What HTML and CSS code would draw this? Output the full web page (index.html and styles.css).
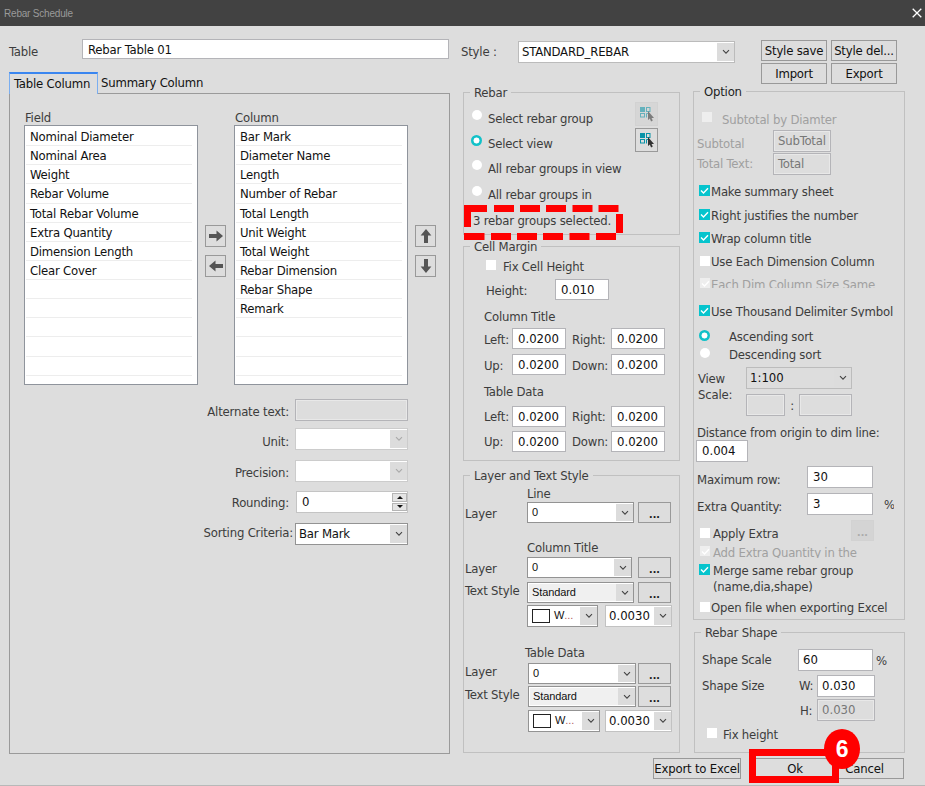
FILE: index.html
```html
<!DOCTYPE html>
<html lang="en">
<head>
<meta charset="utf-8">
<title>Rebar Schedule</title>
<link rel="stylesheet" href="styles.css">
</head>
<body>
<svg class="defs" width="0" height="0" aria-hidden="true">
  <symbol id="chev" viewBox="0 0 8 6"><path d="M1 1.2 4 4.2 7 1.2" fill="none" stroke="currentColor" stroke-width="1.1"/></symbol>
  <symbol id="arrow" viewBox="0 0 14 12"><path d="M0 4h7.500V0.600L14 6l-6.500 5.400V8H0z" fill="currentColor"/></symbol>
  <symbol id="tick" viewBox="0 0 11 11"><path d="M2 5.500 4.500 8 9 3.200" fill="none" stroke="#fff" stroke-width="1.400"/></symbol>
  <symbol id="pick" viewBox="0 0 14 15">
    <rect x="0" y="0" width="5" height="5" fill="#0893a8"/>
    <rect x="6.500" y=".5" width="3.500" height="4" fill="none" stroke="#0893a8"/>
    <rect x=".5" y="6.500" width="4" height="3.500" fill="none" stroke="#0893a8"/>
    <path d="M6.500 10.500V6.500h2" fill="none" stroke="#0893a8"/>
    <path d="M8 4v9l1.800-1.600 1.300 3 1.700-.8-1.300-2.700h2.500z" fill="#333"/>
  </symbol>
</svg>
<div class="dialog">
  <header class="titlebar"><span>Rebar Schedule</span>
    <svg class="close" viewBox="0 0 10 10"><path d="M.7.7l8.600 8.600M9.300.7.7 9.300" stroke="#fff" stroke-width="1.300"/></svg>
  </header>
  <main class="body">
    <section class="left">
      <div class="row table-row"><label class="lbl">Table</label><div class="input">Rebar Table 01</div></div>
      <nav class="tabs"><span class="tab active">Table Column</span><span class="tab">Summary Column</span></nav>
      <div class="tab-panel">
        <div class="lists">
          <div class="list-col"><span class="list-title">Field</span>
            <ul class="list"><li>Nominal Diameter</li><li>Nominal Area</li><li>Weight</li><li>Rebar Volume</li><li>Total Rebar Volume</li><li>Extra Quantity</li><li>Dimension Length</li><li>Clear Cover</li><li></li><li></li><li></li><li></li><li></li></ul>
          </div>
          <div class="movers">
            <button class="sq"><svg><use href="#arrow"/></svg></button>
            <button class="sq"><svg class="w"><use href="#arrow"/></svg></button>
          </div>
          <div class="list-col"><span class="list-title">Column</span>
            <ul class="list"><li>Bar Mark</li><li>Diameter Name</li><li>Length</li><li>Number of Rebar</li><li>Total Length</li><li>Unit Weight</li><li>Total Weight</li><li>Rebar Dimension</li><li>Rebar Shape</li><li>Remark</li><li></li><li></li><li></li></ul>
          </div>
          <div class="movers">
            <button class="sq"><svg class="n"><use href="#arrow"/></svg></button>
            <button class="sq"><svg class="s"><use href="#arrow"/></svg></button>
          </div>
        </div>
        <div class="form">
          <div class="frow"><label class="lbl">Alternate text:</label><div class="input off"></div></div>
          <div class="frow unit"><label class="lbl">Unit:</label><div class="combo pale"><span></span><i><svg><use href="#chev"/></svg></i></div></div>
          <div class="frow precision"><label class="lbl">Precision:</label><div class="combo pale"><span></span><i><svg><use href="#chev"/></svg></i></div></div>
          <div class="frow rounding"><label class="lbl">Rounding:</label><div class="combo soft"><span>0</span><b class="spin"><em class="up"></em><em class="down"></em></b></div></div>
          <div class="frow sorting"><label class="lbl">Sorting Criteria:</label><div class="combo"><span>Bar Mark</span><i><svg><use href="#chev"/></svg></i></div></div>
        </div>
      </div>
    </section>

    <section class="right">
      <div class="style-row">
        <label class="lbl">Style :</label>
        <div class="combo style-combo"><span>STANDARD_REBAR</span><i><svg><use href="#chev"/></svg></i></div>
        <div class="style-btns"><button class="btn">Style save</button><button class="btn">Style del...</button><button class="btn">Import</button><button class="btn">Export</button></div>
      </div>
      <div class="cols">
        <div class="col-mid">
          <div class="group rebar">
            <div class="legend">Rebar</div>
            <div class="rebar-in">
              <div class="radios">
                <div class="row r26"><i class="radio"></i><span>Select rebar group</span></div>
                <div class="row r24"><i class="radio on"></i><span>Select view</span></div>
                <div class="row r26"><i class="radio"></i><span>All rebar groups in view</span></div>
                <div class="row r26"><i class="radio"></i><span>All rebar groups in</span></div>
                <div class="row r26 status">3 rebar groups selected.</div>
              </div>
              <div class="picks"><button class="pick off"><svg><use href="#pick"/></svg></button><button class="pick"><svg><use href="#pick"/></svg></button></div>
            </div>
            <svg class="dashes" viewBox="0 0 159 35" fill="#f00">
              <path d="M0 0h23v7H0zM30 0h20v7H30zM56 0h20v7H56zM82 0h20v7H82zM108.500 0h20v7h-20zM134.500 0h20v7h-20zM0 28h20.500v7H0zM27 28h20v7H27zM53 28h20v7H53zM79 28h20v7H79zM105.500 28h20v7h-20zM132 28h20v7h-20zM0 0h7v22H0zM152 9h7v19h-7z"/>
            </svg>
          </div>

          <div class="group cell">
            <div class="legend">Cell Margin</div>
            <div class="row fix"><i class="chk"></i><span>Fix Cell Height</span></div>
            <div class="row height"><label class="lbl">Height:</label><div class="input">0.010</div></div>
            <div class="row sub">Column Title</div>
            <div class="row quad q1"><label class="lbl">Left:</label><div class="input">0.0200</div><label class="lbl b">Right:</label><div class="input">0.0200</div></div>
            <div class="row quad q2"><label class="lbl">Up:</label><div class="input">0.0200</div><label class="lbl b">Down:</label><div class="input">0.0200</div></div>
            <div class="row sub">Table Data</div>
            <div class="row quad q2 up"><label class="lbl">Left:</label><div class="input">0.0200</div><label class="lbl b">Right:</label><div class="input">0.0200</div></div>
            <div class="row quad q3 up"><label class="lbl">Up:</label><div class="input">0.0200</div><label class="lbl b">Down:</label><div class="input">0.0200</div></div>
          </div>

          <div class="group layer">
            <div class="legend">Layer and Text Style</div>
            <div class="row sub s1">Line</div>
            <div class="row lrow l1"><label class="lbl">Layer</label><div class="combo sm"><span>0</span><i><svg><use href="#chev"/></svg></i></div><button class="btn dots">...</button></div>
            <div class="row sub s2">Column Title</div>
            <div class="row lrow l2"><label class="lbl">Layer</label><div class="combo sm short"><span>0</span><i><svg><use href="#chev"/></svg></i></div><button class="btn dots">...</button></div>
            <div class="row lrow l3 up"><label class="lbl">Text Style</label><div class="combo sm gray"><span>Standard</span><i><svg><use href="#chev"/></svg></i></div><button class="btn dots">...</button></div>
            <div class="row lrow l4"><div class="combo sm color"><span><u></u>W<em>...</em></span><i><svg><use href="#chev"/></svg></i></div><div class="combo pale2 num"><span>0.0030</span><i><svg><use href="#chev"/></svg></i></div></div>
            <div class="row sub s3">Table Data</div>
            <div class="row lrow l5 up wide"><label class="lbl">Layer</label><div class="combo sm"><span>0</span><i><svg><use href="#chev"/></svg></i></div><button class="btn dots">...</button></div>
            <div class="row lrow l6 up wide"><label class="lbl">Text Style</label><div class="combo sm gray"><span>Standard</span><i><svg><use href="#chev"/></svg></i></div><button class="btn dots">...</button></div>
            <div class="row lrow l7 wide"><div class="combo sm color"><span><u></u>W<em>...</em></span><i><svg><use href="#chev"/></svg></i></div><div class="combo pale2 num"><span>0.0030</span><i><svg><use href="#chev"/></svg></i></div></div>
          </div>
        </div>

        <div class="col-right">
          <div class="group option">
            <div class="legend dark">Option</div>
            <div class="row subtotal-by off"><i class="chk"></i><span>Subtotal by Diamter</span></div>
            <div class="row sub-row off"><label class="lbl">Subtotal</label><div class="input off">SubTotal</div></div>
            <div class="row sub-row total off"><label class="lbl">Total Text:</label><div class="input off">Total</div></div>
            <div class="row ck m8"><i class="chk on"><svg><use href="#tick"/></svg></i><span>Make summary sheet</span></div>
            <div class="row ck m6"><i class="chk on"><svg><use href="#tick"/></svg></i><span>Right justifies the number</span></div>
            <div class="row ck m5"><i class="chk on"><svg><use href="#tick"/></svg></i><span>Wrap column title</span></div>
            <div class="row ck m5"><i class="chk"></i><span>Use Each Dimension Column</span></div>
            <div class="row ck m5 off clip12"><i class="chk"><svg><use href="#tick"/></svg></i><span>Each Dim Column Size Same</span></div>
            <div class="row ck m15 clip14"><i class="chk on"><svg><use href="#tick"/></svg></i><span>Use Thousand Delimiter Symbol</span></div>
            <div class="row sort first"><i class="radio on"></i><span>Ascending sort</span></div>
            <div class="row sort"><i class="radio"></i><span>Descending sort</span></div>
            <div class="scale">
              <label class="lbl">View<br>Scale:</label>
              <div class="scale-in">
                <div class="combo flat"><span>1:100</span><i><svg><use href="#chev"/></svg></i></div>
                <div class="ratio"><div class="input off"></div><span>:</span><div class="input off"></div></div>
              </div>
            </div>
            <div class="row dist">Distance from origin to dim line:</div>
            <div class="row dist-in"><div class="input">0.004</div></div>
            <div class="row opt-num n1"><label class="lbl">Maximum row:</label><div class="input">30</div></div>
            <div class="row opt-num n2"><label class="lbl">Extra Quantity:</label><div class="input">3</div><span class="pct">%</span></div>
            <div class="row ck2 apply"><i class="chk"></i><span>Apply Extra</span><button class="btn dots off">...</button></div>
            <div class="row ck2 off clip14 add"><i class="chk"><svg><use href="#tick"/></svg></i><span>Add Extra Quantity in the</span></div>
            <div class="row ck2 merge"><i class="chk on"><svg><use href="#tick"/></svg></i><span>Merge same rebar group<br>(name,dia,shape)</span></div>
            <div class="row ck open"><i class="chk"></i><span>Open file when exporting Excel</span></div>
          </div>
          <div class="group shape">
            <div class="legend">Rebar Shape</div>
            <div class="row sh h1"><label class="lbl">Shape Scale</label><div class="input wide">60</div><span class="pct">%</span></div>
            <div class="row sh h2"><label class="lbl">Shape Size</label><span class="ax">W:</span><div class="input">0.030</div></div>
            <div class="row sh h3"><label class="lbl"></label><span class="ax h">H:</span><div class="input off">0.030</div></div>
            <div class="row fixh"><i class="chk"></i><span>Fix height</span></div>
          </div>
        </div>
      </div>
      <footer class="actions">
        <button class="btn export">Export to Excel</button>
        <div class="ok-wrap"><button class="btn ok">Ok</button><div class="ring"></div><div class="badge">6</div></div>
        <button class="btn cancel">Cancel</button>
      </footer>
    </section>
  </main>
</div>
</body>
</html>
```

FILE: styles.css
```css
* { box-sizing: border-box; }
body { margin: 0; font: 13px/18px "DejaVu Sans Condensed", "Noto Sans", sans-serif; letter-spacing: -.2px; color: #3c3c3c; }
button { font: inherit; letter-spacing: inherit; padding: 0; margin: 0; }
i, em { font-style: normal; }
u { text-decoration: none; }
.defs { position: absolute; }
.dialog { width: 925px; height: 786px; background: #ddd; border-bottom: 1px solid #b8b8b8; overflow: hidden; white-space: nowrap; }
.titlebar { height: 26px; background: #424242; color: #9a9a9a; font: 10px/12px "Liberation Sans", sans-serif; letter-spacing: -.2px; display: flex; justify-content: space-between; padding: 8px 3px 0 4px; }
.close { width: 10px; height: 10px; margin-top: 0; }
.body { display: flex; height: 759px; }
.row { display: flex; align-items: center; height: 18px; }
.row > span { padding-top: 2px; }
.lbl { flex: none; }

/* Controls */
.input { flex: none; height: 21px; border: 1px solid #b4b4b8; background: #fff; color: #111; padding: 0 0 0 5px; line-height: 19px; overflow: hidden; }
.input.off { background: #ddd; color: #777; box-shadow: inset 0 0 0 1px #e8e8e8; }
.combo { flex: none; display: flex; height: 21px; border: 1px solid #939393; background: #fff; color: #111; padding: 1px 0 1px 1px; line-height: 18px; }
.combo > span { flex: 1; padding-left: 2px; overflow: hidden; }
.combo > i { width: 17px; background: #dcdcdc; color: #444; display: flex; align-items: center; justify-content: center; }
.combo > i svg { width: 8px; height: 6px; }
.combo.pale { border-color: #ccc; }
.combo.pale > i { color: #aaa; }
.combo.soft { border-color: #c4c4c4; }
.combo.pale2 { border-color: #c2c2c2; }
.combo.flat { background: #ddd; border-color: #bcbcbc; }
.combo.sm { font: 11px/17px "Liberation Sans", sans-serif; letter-spacing: -.1px; }
.combo.sm > span { padding-left: 3px; }
.combo.gray > span { background: #f0f0f0; }
.cell .input, .dist-in .input, .opt-num .input, .sh .input, .num, .flat { letter-spacing: 0; }
.btn { flex: none; display: block; height: 21px; border: 1px solid #999; background: #ddd; color: #111; line-height: 19px; text-align: center; }
.btn.dots { width: 33px; font: 600 13px/21px "Noto Sans", sans-serif; letter-spacing: 0; }
.radio { flex: none; width: 10px; height: 10px; border-radius: 50%; background: #fff; }
.radio.on { width: 11px; height: 11px; background: radial-gradient(circle, #fff 2.700px, #11c1c8 3.300px); }
.chk { flex: none; width: 10px; height: 10px; background: #fff; }
.chk svg { display: block; width: 11px; height: 11px; }
.chk.on { width: 11px; height: 11px; background: #06c4cd; }
.row.off { color: #a0a0a0; }
.row.off .chk { background: #eee; }
.group { border: 1px solid #c0c0c0; }
.legend { width: max-content; height: 18px; margin: -10px 0 0 6px; padding: 1px 4px 0; line-height: 17px; background: #ddd; }
.legend.dark { color: #222; }

/* Left side */
.left { width: 450px; padding: 13px 0 0 9px; }
.table-row { height: 20px; }
.table-row .lbl { width: 73px; padding-top: 6px; }
.table-row .input { width: 367px; height: 20px; }
.tabs { display: flex; height: 21px; margin-top: 13px; color: #111; }
.tab { padding: 2px 0 0 3px; line-height: 18px; }
.tab.active { width: 89px; height: 22px; padding: 0 0 0 4px; border: 1px solid #7aaef0; border-top: 2px solid #3a86f0; border-bottom: 0; background: #ddd; z-index: 1; line-height: 20px; }
.tab-panel { width: 441px; height: 661px; border: 1px solid #9a9a9a; padding: 15px 0 0 14px; }
.lists { display: flex; }
.list-col { width: 174px; }
.list-title { display: block; height: 16px; line-height: 17px; padding-left: 1px; }
.list { list-style: none; margin: 0; padding: 1px 5px 0 1px; height: 260px; border: 1px solid #8f949c; background: #fff; color: #111; overflow: hidden; }
.list li { height: 19.130px; line-height: 20px; border-bottom: 1px solid #ededed; padding-left: 4px; }
.list-col + .movers { margin: 116px 9px 0 7px; }
.list-col:nth-child(3) { margin-left: -1px; }
.list-col:nth-child(3) + .movers { margin: 116px 0 0 7px; }
.sq { display: flex; width: 21px; height: 22px; border: 1px solid #999; background: #ddd; align-items: center; justify-content: center; color: #555; margin-bottom: 8px; }
.sq svg { flex: none; width: 14px; height: 12px; }
.sq .w { transform: rotate(180deg); }
.sq .n { transform: rotate(-90deg); }
.sq .s { transform: rotate(90deg); }
.form { margin-top: 14px; }
.frow { display: flex; height: 21px; }
.frow .lbl { width: 265px; margin-right: 6px; text-align: right; padding-top: 4px; }
.frow .input, .frow .combo { width: 113px; height: 22px; }
.unit { margin-top: 8px; }
.unit .lbl { padding-top: 5px; }
.precision { margin-top: 11px; }
.rounding { margin-top: 10px; }
.sorting { margin-top: 11px; }
.sorting .lbl { width: 269px; margin-right: 2px; padding-top: 1px; }
.rounding .lbl { margin-right: 7px; padding-top: 3px; }
.rounding .combo { width: 112px; }
.rounding .combo > span { padding-left: 4px; }
.spin { width: 15px; display: flex; flex-direction: column; gap: 1px; }
.spin em { flex: 1; border: 1px solid #b5b5b5; background: #e4e4e4; display: flex; align-items: center; justify-content: center; }
.spin em::before { content: ""; border: 3px solid transparent; }
.spin .up::before { border-top: 0; border-bottom-color: #111; }
.spin .down::before { border-bottom: 0; border-top-color: #111; }

/* Right side */
.right { width: 475px; padding: 14px 0 0 11px; }
.style-row { display: flex; height: 51px; }
.style-row > .lbl { width: 57px; padding-top: 3px; }
.style-combo { width: 217px; height: 22px; margin: 1px 26px 0 0; border-color: #bbb; }
.style-btns { display: grid; grid-template-columns: 66px 66px; grid-auto-rows: 21px; gap: 2px 4px; height: 44px; }
.cols { display: flex; margin-left: 2px; }
.col-mid { width: 217px; padding-top: 1px; margin-right: 13px; }
.col-right { width: 212px; }

.rebar { height: 143px; position: relative; }
.rebar-in { display: flex; }
.radios { width: 171px; padding: 4px 0 0 8px; }
.radios .row > span { padding-top: 1px; }
.radios .radio { margin: 0 6px 6px 0; }
.radios .radio.on { margin: 0 6px 5px -1px; }
.r26 { height: 26px; }
.r24 { height: 24px; }
.radios .status { padding: 2px 0 0 1px; }
.picks { padding-top: 1px; }
.pick { display: flex; align-items: center; justify-content: center; width: 23px; height: 24px; border: 1px solid #999; background: #ddd; margin-bottom: 2px; }
.pick svg { flex: none; width: 14px; height: 15px; }
.pick.off { border-color: #d2d2d2; background: #d6d6d6; }
.pick.off svg { opacity: .55; }
.dashes { position: absolute; left: 0; top: 112px; width: 159px; height: 35px; }

.cell { height: 215px; margin-top: 11px; }
.fix { height: 22px; padding-left: 22px; }
.fix .chk { margin: 0 7px 3px 0; }
.height { margin-top: 2px; height: 21px; padding-left: 22px; }
.height .lbl { width: 69px; padding-top: 3px; }
.height .input { width: 54px; }
.cell .input { padding-left: 5px; }
.cell .sub { margin-top: 8px; padding-left: 20px; }
.quad { height: 21px; padding-left: 20px; }
.quad .lbl { width: 28px; padding-top: 3px; }
.quad.up .lbl { padding-top: 0; }
.quad .lbl.b { width: 39px; margin-left: 6px; }
.quad .input { width: 54px; }
.q1 { margin-top: 2px; }
.q2 { margin-top: 5px; }
.q3 { margin-top: 4px; }

.layer { height: 278px; margin-top: 14px; }
.layer .sub { padding-left: 63px; }
.s1 { margin-top: 1px; }
.lrow { height: 21px; padding-left: 1px; }
.lrow .lbl { width: 62px; padding-top: 3px; }
.lrow.up .lbl { padding: 0 0 4px; }
.lrow .combo { width: 107px; margin-right: 4px; }
.lrow .combo.short { width: 105px; margin-right: 6px; }
.lrow.wide .lbl { width: 63px; }
.lrow.wide .combo { width: 108px; margin-right: 2px; }
.l1 { margin-top: -1px; }
.s2 { margin-top: 16px; }
.l3 { margin-top: 4px; }
.l4 { margin-top: 2px; padding-left: 63px; }
.s3 { margin-top: 18px; }
.layer .s3 { padding-left: 61px; }
.l5 { margin-top: 1px; }
.l6 { margin-top: 2px; }
.l7 { margin-top: 3px; padding-left: 64px; }
.lrow .combo.color { width: 71px; margin-right: 7px; height: 22px; }
.lrow.wide .combo.color { width: 72px; margin-right: 5px; }
.combo.color > span { display: flex; align-items: center; }
.color u { width: 18px; height: 14px; border: 1px solid #222; margin-right: 4px; }
.color em { color: #b06060; }
.lrow .combo.num { width: 67px; margin-right: 0; height: 22px; }

.option { height: 529px; }
.subtotal-by { height: 22px; margin-top: 8px; padding-left: 8px; }
.subtotal-by .chk { margin: 0 10px 4px 0; }
.sub-row { height: 21px; padding-left: 3px; }
.sub-row .lbl { width: 76px; padding-top: 6px; }
.sub-row.total .lbl { padding-top: 1px; }
.sub-row .input { width: 58px; height: 22px; padding-left: 4px; }
.sub-row.total { margin-top: 2px; }
.ck { padding-left: 5px; }
.ck .chk { margin: 0 1px 1px 0; }
.ck .chk:not(.on) { margin-left: 1px; }
.m8 { margin-top: 8px; } .m6 { margin-top: 6px; } .m5 { margin-top: 5px; } .m15 { margin-top: 15px; }
.clip12 { height: 13px; margin-bottom: -1px; overflow: hidden; align-items: flex-start; }
.clip14 { height: 15px; margin-bottom: -1px; overflow: hidden; align-items: flex-start; }
.row.clip12 > span, .row.clip14 > span { padding-top: 1px; }
.clip12 .chk, .clip14 .chk { margin-top: 3px; }
.sort { padding-left: 6px; }
.sort .radio { width: 10px; margin: 0 19px 2px 0; }
.sort .radio.on { width: 11px; margin: 0 19px 2px -1px; }
.sort.first { margin-top: 11px; }
.scale { display: flex; margin: 4px 0 0 4px; height: 48px; }
.scale > .lbl { width: 48px; line-height: 16px; padding-top: 4px; }
.scale .combo { width: 106px; height: 22px; }
.ratio { display: flex; margin-top: 5px; }
.ratio span { width: 14px; text-align: center; line-height: 24px; }
.ratio .input { width: 39px; height: 22px; }
.ratio .input + span + .input { width: 53px; }
.dist { margin-top: 8px; padding: 2px 0 0 3px; }
.dist-in { margin-top: -1px; height: 21px; padding-left: 2px; }
.dist-in .input { width: 52px; height: 22px; }
.opt-num { height: 21px; padding-left: 3px; }
.opt-num .lbl { width: 110px; padding-top: 7px; }
.opt-num .input { width: 66px; height: 22px; }
.opt-num .pct { margin-left: 11px; width: 10px; overflow: hidden; }
.n1 { margin-top: 5px; }
.n2 { margin-top: 6px; }
.ck2 { padding-left: 5px; }
.ck2 .chk { margin-right: 3px; }
.ck2 .chk:not(.on) { margin: 0 3px 0 1px; }
.apply { height: 21px; margin-top: 6px; }
.apply .chk:not(.on) { margin-top: 4px; }
.row.apply > span { width: 138px; padding-top: 6px; }
.apply .btn.off { width: 23px; border-color: #d2d2d2; background: #d4d4d4; color: #aaa; }
.add { margin-top: 2px; }
.add .chk:not(.on) { margin-top: 3px; }
.merge { height: 32px; margin-top: 5px; line-height: 16px; align-items: flex-start; }
.row.merge > span { padding-top: 1px; }
.merge .chk { margin-top: 2px; }
.open { margin-top: 4px; }

.shape { height: 121px; margin: 12px 0 0 1px; width: 211px; }
.sh { height: 21px; padding-left: 7px; }
.sh .lbl { width: 96px; }
.sh .input.wide { width: 75px; }
.sh .pct { margin: 1px 0 0 3px; }
.row.sh .ax { width: 19px; padding: 1px 0 0 1px; }
.row.sh .ax.h { padding: 3px 0 0 2px; }
.sh .input { width: 58px; height: 22px; padding-left: 4px; }
.h1 { margin-top: 8px; }
.h2 { margin-top: 5px; }
.h3 { margin-top: 3px; }
.fixh { margin-top: 5px; padding-left: 12px; }
.fixh .chk { margin: 0 6px 2px 0; }

.actions { display: flex; margin: 5px 0 0 192px; }
.export { width: 88px; overflow: hidden; }
.ok-wrap { position: relative; margin-left: 14px; }
.ok { width: 80px; }
.ring { position: absolute; left: -6px; top: -9px; width: 90px; height: 34px; border: 7px solid #f00; }
.badge { position: absolute; z-index: 2; left: 69px; top: -29px; width: 36px; height: 40px; border-radius: 50%; background: #f00; color: #fff; font: bold 23px/40px "Liberation Sans", sans-serif; text-align: center; }
.cancel { width: 79px; margin-left: -10px; }
```
